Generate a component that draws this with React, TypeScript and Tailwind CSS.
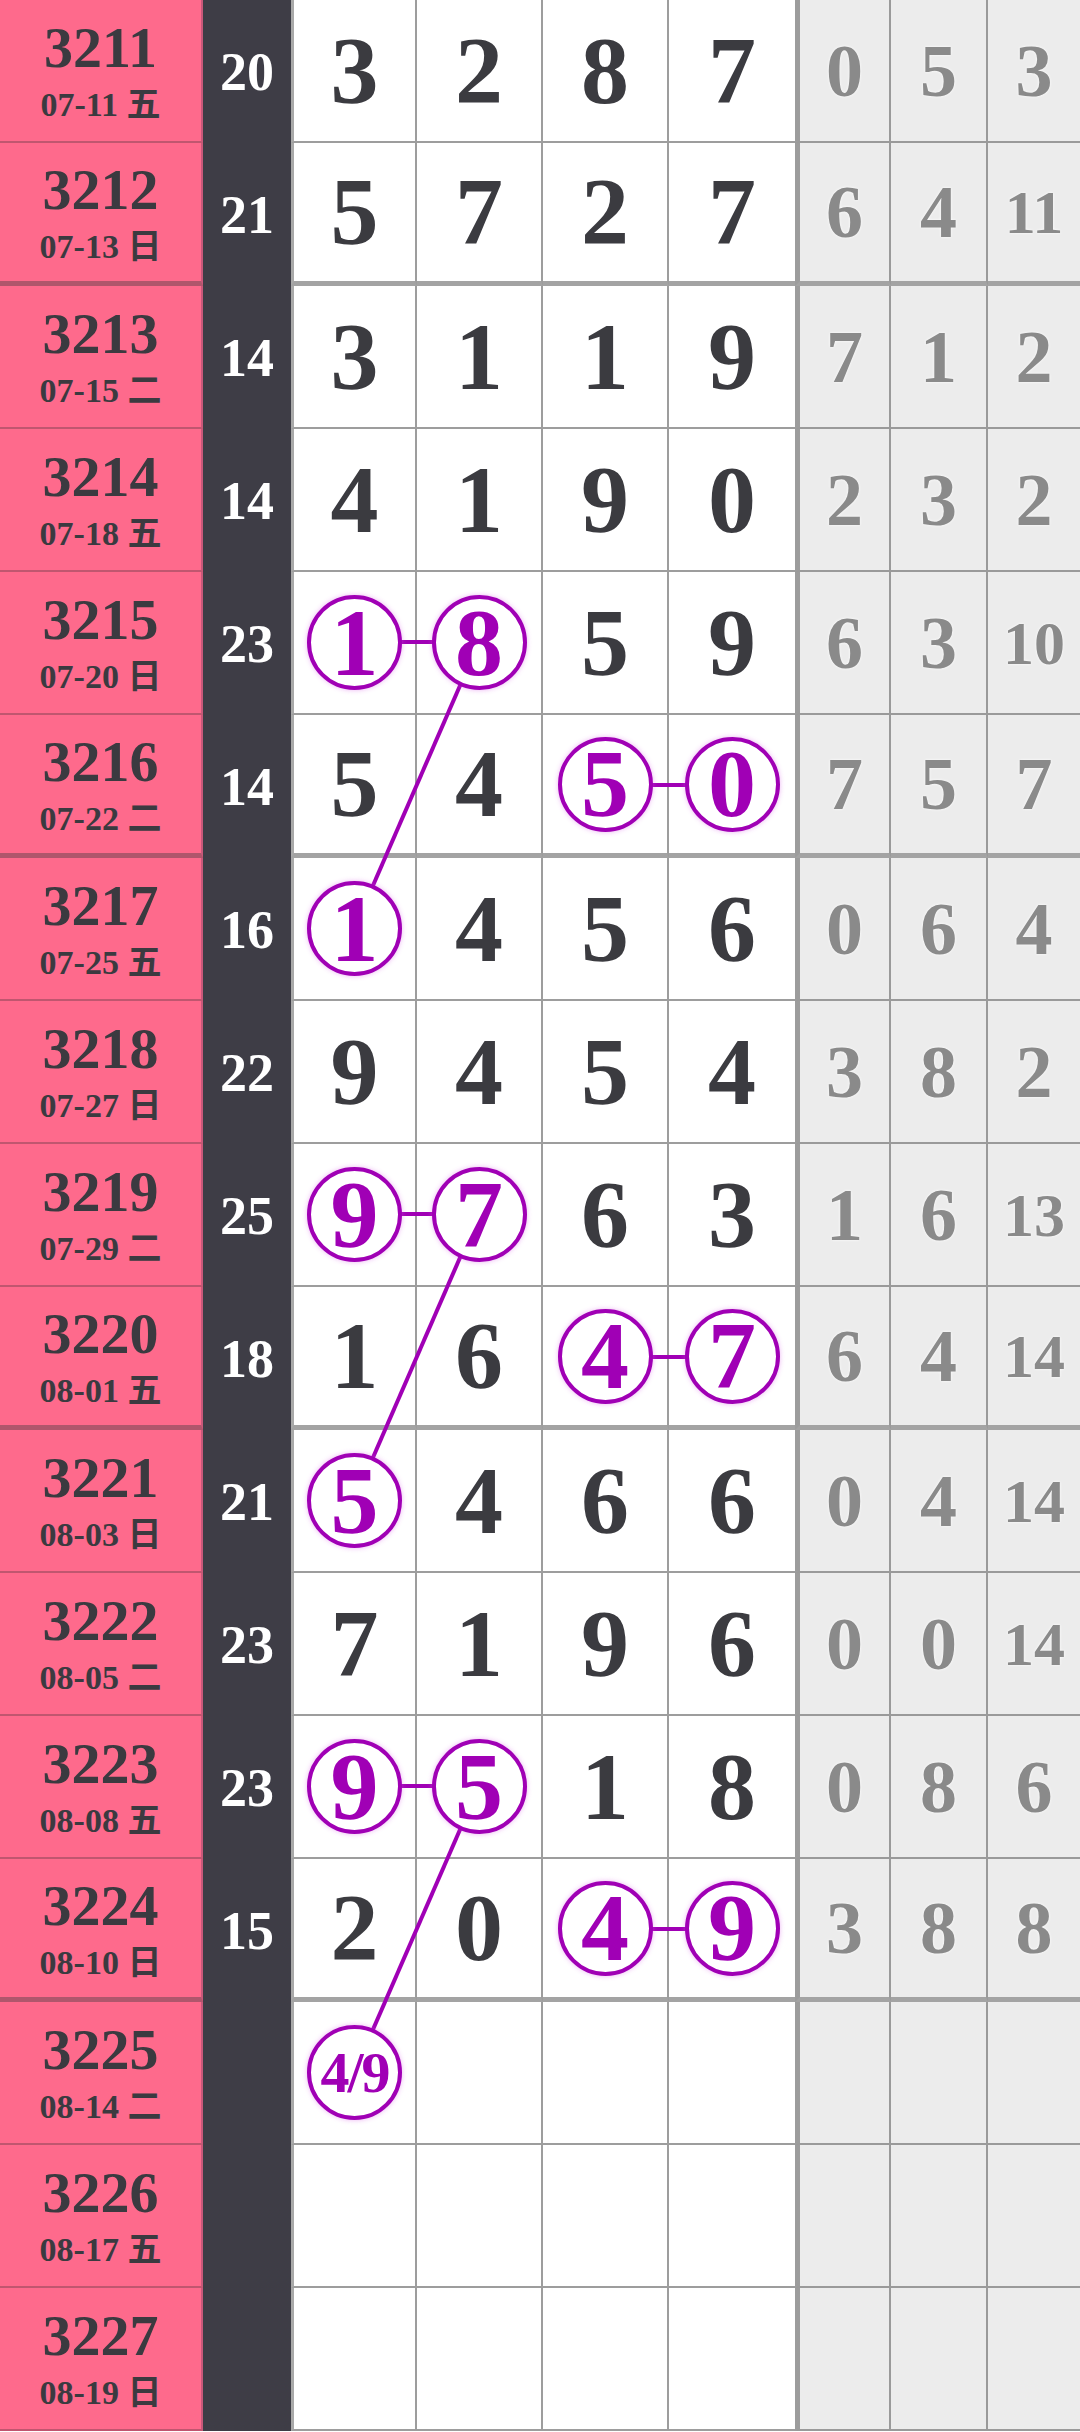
import React from "react";

type Row = {
  no: string;
  date: string;
  sum: string;
  d: string[];
  g: string[];
};

const rows: Row[] = [
  { no: "3211", date: "07-11 五", sum: "20", d: ["3", "2", "8", "7"], g: ["0", "5", "3"] },
  { no: "3212", date: "07-13 日", sum: "21", d: ["5", "7", "2", "7"], g: ["6", "4", "11"] },
  { no: "3213", date: "07-15 二", sum: "14", d: ["3", "1", "1", "9"], g: ["7", "1", "2"] },
  { no: "3214", date: "07-18 五", sum: "14", d: ["4", "1", "9", "0"], g: ["2", "3", "2"] },
  { no: "3215", date: "07-20 日", sum: "23", d: ["1", "8", "5", "9"], g: ["6", "3", "10"] },
  { no: "3216", date: "07-22 二", sum: "14", d: ["5", "4", "5", "0"], g: ["7", "5", "7"] },
  { no: "3217", date: "07-25 五", sum: "16", d: ["1", "4", "5", "6"], g: ["0", "6", "4"] },
  { no: "3218", date: "07-27 日", sum: "22", d: ["9", "4", "5", "4"], g: ["3", "8", "2"] },
  { no: "3219", date: "07-29 二", sum: "25", d: ["9", "7", "6", "3"], g: ["1", "6", "13"] },
  { no: "3220", date: "08-01 五", sum: "18", d: ["1", "6", "4", "7"], g: ["6", "4", "14"] },
  { no: "3221", date: "08-03 日", sum: "21", d: ["5", "4", "6", "6"], g: ["0", "4", "14"] },
  { no: "3222", date: "08-05 二", sum: "23", d: ["7", "1", "9", "6"], g: ["0", "0", "14"] },
  { no: "3223", date: "08-08 五", sum: "23", d: ["9", "5", "1", "8"], g: ["0", "8", "6"] },
  { no: "3224", date: "08-10 日", sum: "15", d: ["2", "0", "4", "9"], g: ["3", "8", "8"] },
  { no: "3225", date: "08-14 二", sum: "", d: ["4/9", "", "", ""], g: ["", "", ""] },
  { no: "3226", date: "08-17 五", sum: "", d: ["", "", "", ""], g: ["", "", ""] },
  { no: "3227", date: "08-19 日", sum: "", d: ["", "", "", ""], g: ["", "", ""] },
];

// which cells get a purple ring: row index -> column indexes
const circled: Record<number, number[]> = {
  4: [0, 1],
  5: [2, 3],
  6: [0],
  8: [0, 1],
  9: [2, 3],
  10: [0],
  12: [0, 1],
  13: [2, 3],
  14: [0],
};

const ROW_H = 143;
const colX = [354.5, 479, 605, 732];
const rowY = (r: number) => r * ROW_H + 70;

const links: [number, number, number, number][] = [
  [4, 0, 4, 1],
  [5, 2, 5, 3],
  [4, 1, 6, 0],
  [8, 0, 8, 1],
  [9, 2, 9, 3],
  [8, 1, 10, 0],
  [12, 0, 12, 1],
  [13, 2, 13, 3],
  [12, 1, 14, 0],
];

const serif = "font-['Liberation_Serif','Noto_Sans_CJK_SC',serif]";

function Ring({ value }: { value: string }) {
  const small = value.length > 1;
  return (
    <div className="relative z-20 flex h-[95px] w-[95px] items-center justify-center rounded-full border-[4px] border-[#a000b5] bg-white shadow-[0_0_5px_rgba(214,90,230,0.45)]">
      <span
        className={
          small
            ? "text-[58px] leading-[58px] font-bold text-[#a000b5] tracking-[-2px]"
            : "text-[96px] leading-[96px] font-bold text-[#a000b5]"
        }
      >
        {value}
      </span>
    </div>
  );
}

export default function App() {
  return (
    <div className={`relative w-[1080px] h-[2432px] overflow-hidden bg-white ${serif}`}>
      {rows.map((row, r) => {
        const thick = r % 4 === 1;
        const bottom = thick ? "border-b-[5px]" : "border-b-2";
        const ring = circled[r] || [];
        return (
          <div key={row.no} className="flex h-[143px]">
            <div
              className={`flex w-[203px] flex-col items-center justify-center gap-[11px] border-r-2 border-[#c9587a] bg-[#fe6a8c] text-[#3b3a40] ${bottom} ${
                thick ? "border-b-[#b0566c]" : "border-b-[#c0566f]"
              }`}
            >
              <span className="text-[58px] leading-[58px] font-bold">{row.no}</span>
              <span className="text-[34px] leading-[34px] font-bold">{row.date}</span>
            </div>
            <div className="flex w-[88px] items-center justify-center bg-[#3e3d46] text-[54px] leading-[54px] font-bold text-white">
              {row.sum}
            </div>
            {row.d.map((v, c) => (
              <div
                key={c}
                className={`flex w-[126px] items-center justify-center border-[#9d9d9d] bg-white text-[96px] leading-[96px] font-bold text-[#3b3b40] ${bottom} ${
                  c === 0 ? "border-l-[3px] border-l-[#a9a9a9]" : ""
                } ${c < 3 ? "border-r-2" : ""} ${thick ? "border-b-[#a3a3a3]" : ""}`}
              >
                {v && (ring.includes(c) ? <Ring value={v} /> : v)}
              </div>
            ))}
            {row.g.map((v, c) => (
              <div
                key={c}
                className={`flex items-center justify-center border-[#9a9a9a] bg-[#ececec] font-bold text-[#8a8a8a] [text-shadow:0_0_3px_#fff] ${bottom} ${
                  v.length > 1 ? "text-[62px] leading-[62px]" : "text-[74px] leading-[74px]"
                } ${c === 0 ? "w-[96px] border-l-[5px] border-l-[#9c9c9c]" : ""} ${
                  c === 1 ? "w-[97px]" : ""
                } ${c < 2 ? "border-r-2" : "flex-1"} ${thick ? "border-b-[#a3a3a3]" : ""}`}
              >
                {v}
              </div>
            ))}
          </div>
        );
      })}
      <svg className="pointer-events-none absolute inset-0 z-10" width="1080" height="2432">
        {links.map(([r1, c1, r2, c2], i) => (
          <line
            key={i}
            x1={colX[c1]}
            y1={rowY(r1)}
            x2={colX[c2]}
            y2={rowY(r2)}
            stroke="#a000b5"
            strokeWidth={4}
          />
        ))}
      </svg>
    </div>
  );
}
